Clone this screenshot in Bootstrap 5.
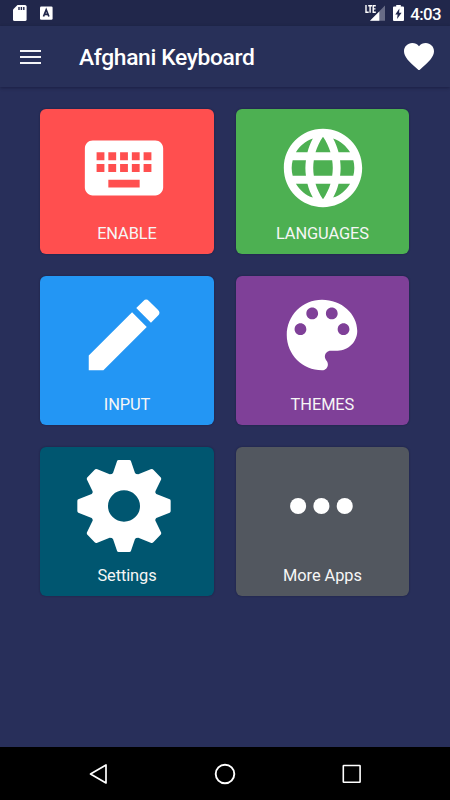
<!DOCTYPE html>
<html lang="en">
<head>
<meta charset="utf-8">
<meta name="viewport" content="width=device-width, initial-scale=1">
<title>Afghani Keyboard</title>
<link href="https://cdn.jsdelivr.net/npm/bootstrap@5.3.0/dist/css/bootstrap.min.css" rel="stylesheet">
<style>
  body { font-family: Roboto, "Liberation Sans", sans-serif; background: #282f5a; color: #fff; height: 800px; overflow: hidden; }
  svg { display: block; flex: none; }
  .status-bar { height: 26px; background: #21274b; padding: 0 9px 0 12px; }
  .battery { margin: 0 5.500px 0 8px; }
  .clock { font-size: 16.800px; font-weight: 500; line-height: 26px; letter-spacing: -.55px; padding: 1px 0 0 1px; }
  .app-bar { height: 61px; background: #283059; padding: 0 16px 0 20px; box-shadow: 0 1px 3px rgba(10, 14, 40, .45); z-index: 1; }
  .app-title { font-size: 22.8px; font-weight: 500; line-height: 28px; letter-spacing: -.34px; margin-left: 38px; padding-top: 3px; }
  .tiles { display: grid; grid-template-columns: 174px 173.5px; grid-template-rows: 145px 149px 149px; gap: 22px 21.7px; padding: 22.3px 0 0 40px; }
  .tile { border-radius: 6px; padding: 12px 0 8px; box-shadow: 0 0 2px rgba(10, 12, 40, .45); color: #fff; }
  .tile svg { width: 94px; height: 94px; }
  .nudge { margin-right: 6px; }
  .globe { margin-left: 1px; }
  .tile-label { font-size: 16.4px; line-height: 24px; letter-spacing: -.08px; color: #f6f6f6; }
  .t-red { background: #ff4f4f; } .t-green { background: #4db052; } .t-blue { background: #2396f4; }
  .t-purple { background: #7f4098; } .t-teal { background: #005670; } .t-gray { background: #52575f; }
  .nav-keys { height: 53px; background: #000; padding: 0 87px 0 88px; }
</style>
<script src="https://cdn.jsdelivr.net/npm/bootstrap@5.3.0/dist/js/bootstrap.bundle.min.js"></script>
</head>
<body class="d-flex flex-column m-0">
  <header class="status-bar d-flex align-items-center justify-content-between">
    <div class="d-flex align-items-center">
      <svg width="16" height="18" viewBox="0 0 16 18"><path fill="#fff" d="M5.500 1H13q1.600 0 1.600 1.600V15.400q0 1.600-1.600 1.600H2.600Q1 17 1 15.400V5.500z"/><path fill="#21274b" d="M6.300 3h1.400v3H6.300zm2.400 0h1.400v3H8.700zm2.400 0h1.400v3h-1.400z"/></svg>
      <svg class="ms-2 ps-1" width="20" height="18" viewBox="0 0 16 18"><rect x="0" y="2.500" width="12.600" height="13.300" rx="1.300" fill="#fff"/><path fill="none" stroke="#21274b" stroke-width="1.700" d="M3.500 12.500 6.200 5.800 8.900 12.500M4.500 10.400h3.500"/></svg>
    </div>
    <div class="d-flex align-items-center">
      <svg width="20" height="18" viewBox="0 0 20 18"><path fill="#686c86" d="M20 1.500v15.300H5z"/><path fill="#fff" d="M14.300 7.400v9.400H5z"/><path fill="#21274b" d="M0 0h11.300v9.300H0z"/><path fill="none" stroke="#fff" stroke-width="1.400" d="M1 1v7.200h2.700M3.200 1.700h3.800M5.100 1.700v7.100M10.800 1.700H8.200v6.500h2.600M8.200 4.900h2.300"/></svg>
      <svg class="battery" width="11" height="18" viewBox="0 0 11 18"><path fill="#fff" d="M3.200 1h4.600v1.600H10q1 0 1 1V16q0 1-1 1H1q-1 0-1-1V3.600q0-1 1-1h2.200z"/><path fill="#21274b" d="M6.400 4.600 2.300 10.500h2.300l-.5 4.600 4.500-6.400H6.100z"/></svg>
      <span class="clock">4:03</span>
    </div>
  </header>

  <nav class="app-bar d-flex align-items-center position-relative">
    <svg width="21" height="16" viewBox="0 0 21 16"><path fill="#f4f4f7" d="M0 1h21v2H0zm0 6h21v2H0zm0 6h21v2H0z"/></svg>
    <h1 class="app-title mb-0">Afghani Keyboard</h1>
    <svg class="ms-auto" width="30" height="27.500" viewBox="2 3 20 18.350" preserveAspectRatio="none"><path fill="#fff" d="M12 21.350l-1.450-1.320C5.400 15.360 2 12.280 2 8.500 2 5.420 4.420 3 7.500 3c1.740 0 3.410.81 4.500 2.090C13.090 3.810 14.760 3 16.500 3 19.580 3 22 5.420 22 8.500c0 3.780-3.400 6.860-8.550 11.540z"/></svg>
  </nav>

  <main class="tiles flex-grow-1">
    <a class="tile t-red d-flex flex-column align-items-center justify-content-between text-decoration-none">
      <svg class="nudge" viewBox="0 0 24 24" fill="#fff"><path d="M20 5H4c-1.100 0-1.990.9-1.990 2L2 17c0 1.100.9 2 2 2h16c1.100 0 2-.9 2-2V7c0-1.100-.9-2-2-2zm-9 3h2v2h-2V8zm0 3h2v2h-2v-2zM8 8h2v2H8V8zm0 3h2v2H8v-2zm-1 2H5v-2h2v2zm0-3H5V8h2v2zm9 7H8v-2h8v2zm0-4h-2v-2h2v2zm0-3h-2V8h2v2zm3 3h-2v-2h2v2zm0-3h-2V8h2v2z"/></svg>
      <span class="tile-label">ENABLE</span>
    </a>
    <a class="tile t-green d-flex flex-column align-items-center justify-content-between text-decoration-none">
      <svg class="globe" viewBox="0 0 24 24" fill="#fff"><path d="M11.990 2C6.470 2 2 6.480 2 12s4.470 10 9.990 10C17.520 22 22 17.520 22 12S17.520 2 11.990 2zm6.930 6h-2.950c-.32-1.250-.78-2.450-1.380-3.560 1.840.63 3.370 1.910 4.330 3.560zM12 4.040c.83 1.200 1.480 2.530 1.910 3.960h-3.820c.43-1.430 1.080-2.760 1.910-3.960zM4.260 14C4.100 13.360 4 12.690 4 12s.1-1.360.26-2h3.380c-.08.66-.14 1.320-.14 2s.06 1.340.14 2H4.260zm.82 2h2.950c.32 1.250.78 2.450 1.380 3.560-1.840-.63-3.370-1.900-4.330-3.560zm2.950-8H5.080c.96-1.660 2.490-2.930 4.330-3.560C8.810 5.550 8.350 6.750 8.030 8zM12 19.960c-.83-1.200-1.480-2.530-1.910-3.960h3.820c-.43 1.430-1.080 2.760-1.910 3.960zM14.340 14H9.660c-.09-.66-.16-1.320-.16-2s.07-1.350.16-2h4.680c.09.65.16 1.320.16 2s-.07 1.340-.16 2zm.25 5.560c.6-1.110 1.060-2.310 1.380-3.560h2.950c-.96 1.650-2.490 2.930-4.330 3.560zM16.360 14c.08-.66.14-1.320.14-2s-.06-1.340-.14-2h3.380c.16.64.26 1.310.26 2s-.1 1.360-.26 2h-3.380z"/></svg>
      <span class="tile-label">LANGUAGES</span>
    </a>
    <a class="tile t-blue d-flex flex-column align-items-center justify-content-between text-decoration-none">
      <svg class="nudge" viewBox="0 0 24 24" fill="#fff"><path d="M3 17.250V21h3.750L17.810 9.940l-3.750-3.750zM20.710 7.040a1 1 0 0 0 0-1.410l-2.340-2.340a1 1 0 0 0-1.410 0l-1.830 1.830 3.750 3.750z"/></svg>
      <span class="tile-label">INPUT</span>
    </a>
    <a class="tile t-purple d-flex flex-column align-items-center justify-content-between text-decoration-none">
      <svg viewBox="0 0 24 24" fill="#fff"><path d="M12 3c-4.970 0-9 4.030-9 9s4.030 9 9 9c.83 0 1.500-.67 1.500-1.500 0-.39-.15-.74-.39-1.010-.23-.26-.38-.61-.38-.99 0-.83.67-1.500 1.500-1.500H16c2.760 0 5-2.240 5-5 0-4.420-4.030-8-9-8zm-5.500 9c-.83 0-1.500-.67-1.500-1.500S5.670 9 6.500 9 8 9.670 8 10.500 7.330 12 6.500 12zm3-4C8.670 8 8 7.330 8 6.500S8.670 5 9.500 5s1.500.67 1.500 1.500S10.330 8 9.500 8zm5 0c-.83 0-1.500-.67-1.500-1.500S13.670 5 14.500 5s1.500.67 1.500 1.500S15.330 8 14.500 8zm3 4c-.83 0-1.500-.67-1.500-1.500S16.670 9 17.500 9s1.500.67 1.500 1.500-.67 1.500-1.500 1.500z"/></svg>
      <span class="tile-label">THEMES</span>
    </a>
    <a class="tile t-teal d-flex flex-column align-items-center justify-content-between text-decoration-none">
      <svg class="nudge" viewBox="-141 -141 282 282"><path fill="#fff" fill-rule="evenodd" d="M-16-138H16Q20-138 21-134L33-99Q35-95 43-95L80-110Q85-112 88-109L109-87Q113-84 111-79L95-46Q92-40 97-36L137-20Q140-19 140-15V15Q140 19 137 20L97 36Q92 40 95 46L111 79Q113 84 109 87L88 109Q85 112 80 110L43 95Q35 95 33 99L21 134Q20 138 16 138H-16Q-20 138-21 134L-33 99Q-35 95-43 95L-80 110Q-85 112-88 109L-109 87Q-113 84-111 79L-95 46Q-92 40-97 36L-137 20Q-140 19-140 15V-15Q-140-19-137-20L-97-36Q-92-40-95-46L-111-79Q-113-84-109-87L-88-109Q-85-112-80-110L-43-95Q-35-95-33-99L-21-134Q-20-138-16-138ZM-48 0a48 47 0 1 0 96 0a48 47 0 1 0-96 0Z"/></svg>
      <span class="tile-label">Settings</span>
    </a>
    <a class="tile t-gray d-flex flex-column align-items-center justify-content-between text-decoration-none">
      <svg viewBox="0 0 24 24" fill="#fff"><circle cx="5.900" cy="12" r="2.050"/><circle cx="11.850" cy="12" r="2.050"/><circle cx="17.800" cy="12" r="2.050"/></svg>
      <span class="tile-label">More Apps</span>
    </a>
  </main>

  <footer class="nav-keys d-flex align-items-center justify-content-between">
    <svg width="20" height="22" viewBox="0 0 20 22" fill="none" stroke="#fff" stroke-width="1.700"><path stroke-linejoin="round" d="M18 2v18L2.500 11z"/></svg>
    <svg width="22" height="22" viewBox="0 0 22 22" fill="none" stroke="#fff" stroke-width="1.900"><circle cx="11" cy="11" r="9.300"/></svg>
    <svg width="22" height="22" viewBox="0 0 22 22" fill="none" stroke="#fff" stroke-width="1.600"><rect x="2.300" y="2.500" width="16.800" height="16.800" rx=".5"/></svg>
  </footer>
</body>
</html>
